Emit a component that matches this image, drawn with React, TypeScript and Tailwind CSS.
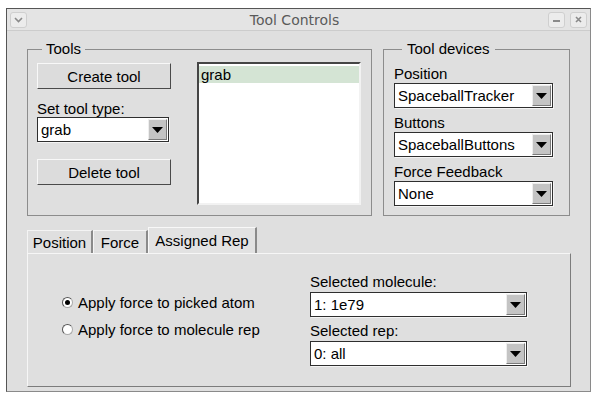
import React from "react";

function Arrow() {
  return (
    <svg width="11" height="6" viewBox="0 0 11 6">
      <path d="M0 0H11L5.5 6Z" fill="#000" />
    </svg>
  );
}

function Select({ value, w }: { value: string; w: string }) {
  return (
    <div className={`${w} h-[25px] flex border border-[#2e2e2e] bg-white shadow-[1px_1px_0_#f4f4f4]`}>
      <div className="flex-1 pl-[3px] flex items-center text-[15px] leading-none text-black">{value}</div>
      <div className="w-[19px] my-px mr-px bg-[#c4c4c4] border border-t-[#eeeeee] border-l-[#eeeeee] border-r-[#7a7a7a] border-b-[#7a7a7a] flex items-center justify-center">
        <Arrow />
      </div>
    </div>
  );
}

function Btn({ label }: { label: string }) {
  return (
    <div className="w-[134px] h-[26px] bg-[#dcdcdc] border border-t-[#f8f8f8] border-l-[#f8f8f8] border-r-[#4a4a4a] border-b-[#4a4a4a] flex items-center justify-center text-[15px] leading-none text-black">
      {label}
    </div>
  );
}

function Radio({ checked, label }: { checked: boolean; label: string }) {
  return (
    <div className="h-[27px] flex items-center gap-[5px]">
      <div className="w-[11px] h-[11px] rounded-full bg-white border border-t-[#555] border-l-[#555] border-r-[#aaa] border-b-[#aaa] flex items-center justify-center">
        {checked && <div className="w-[5px] h-[5px] rounded-full bg-black" />}
      </div>
      <span className="text-[15px] leading-none text-black">{label}</span>
    </div>
  );
}

function TitleBtn({ children }: { children: React.ReactNode }) {
  return (
    <div className="w-[17px] h-[16px] rounded-[3px] bg-[#ececec] border border-[#cfcfcf] flex items-center justify-center">
      {children}
    </div>
  );
}

export default function App() {
  return (
    <div className="w-[597px] h-[398px] bg-white overflow-hidden font-['Liberation_Sans',Arial,sans-serif] text-black">
      <div className="ml-[6px] mt-[8px] w-[585px] h-[384px] border border-[#8a8a8a] border-t-[#555] border-l-[#555] bg-[#dfdfdf] flex flex-col">
        {/* Title bar */}
        <div className="h-[22px] bg-[#e4e4e4] border-b border-[#cccccc] flex items-center px-[3px]">
          <div className="w-[31px]">
            <TitleBtn>
              <svg width="9" height="6" viewBox="0 0 9 6">
                <path d="M1 1L4.5 4.5L8 1" stroke="#8a8a8a" strokeWidth="1.6" fill="none" />
              </svg>
            </TitleBtn>
          </div>
          <div className="flex-1 text-center font-['DejaVu_Sans',sans-serif] text-[14px] text-[#5a5a5a] leading-none">
            Tool Controls
          </div>
          <div className="flex gap-[5px]">
            <TitleBtn>
              <div className="w-[7px] h-[2px] bg-[#8a8a8a] mt-[3px]" />
            </TitleBtn>
            <TitleBtn>
              <svg width="7" height="7" viewBox="0 0 7 7">
                <path d="M1 1L6 6M6 1L1 6" stroke="#8a8a8a" strokeWidth="1.6" />
              </svg>
            </TitleBtn>
          </div>
        </div>

        {/* Body */}
        <div className="flex-1 flex flex-col px-[20px] pt-[10px] pb-[4px]">
          <div className="flex gap-[11px] items-stretch">
            <fieldset className="w-[346px] border border-[#8c8c8c] pl-[9px] pr-[10px] pt-[5px] pb-[10px] flex justify-between">
              <legend className="ml-[5px] px-[4px] text-[15px] leading-[16px]">Tools</legend>
              <div className="flex flex-col pt-[1px]">
                <Btn label="Create tool" />
                <div className="mt-[11px] text-[15px] leading-[17px]">Set tool type:</div>
                <Select value="grab" w="w-[132px]" />
                <div className="mt-[17px]">
                  <Btn label="Delete tool" />
                </div>
              </div>
              <div className="w-[164px] h-[143px] bg-white border-2 border-t-[#454545] border-l-[#454545] border-r-[#f2f2f2] border-b-[#f2f2f2] pt-[2px]">
                <div className="h-[17px] bg-[#d4e4d4] pl-[2px] text-[15px] leading-[17px]">grab</div>
              </div>
            </fieldset>

            <fieldset className="w-[186px] border border-[#8c8c8c] pl-[10px] pr-[16px] pt-[8px] pb-[8px] flex flex-col">
              <legend className="ml-[8px] px-[5px] text-[15px] leading-[16px]">Tool devices</legend>
              <div className="text-[15px] leading-[17px]">Position</div>
              <div className="mt-px">
                <Select value="SpaceballTracker" w="w-[159px]" />
              </div>
              <div className="mt-[6px] text-[15px] leading-[17px]">Buttons</div>
              <div className="mt-px">
                <Select value="SpaceballButtons" w="w-[159px]" />
              </div>
              <div className="mt-[6px] text-[15px] leading-[17px]">Force Feedback</div>
              <div className="mt-px">
                <Select value="None" w="w-[159px]" />
              </div>
            </fieldset>
          </div>

          {/* Tabs */}
          <div className="mt-[11px] flex items-end h-[26px]">
            <div className="w-[66px] h-[23px] border-l border-t border-[#f4f4f4] border-r-2 border-r-[#8a8a8a] flex items-center justify-center text-[15px] leading-none">
              Position
            </div>
            <div className="w-[55px] h-[23px] border-l border-t border-[#f4f4f4] border-r-2 border-r-[#8a8a8a] flex items-center justify-center text-[15px] leading-none">
              Force
            </div>
            <div className="w-[109px] h-[26px] bg-[#e2e2e2] border-l border-t border-[#f8f8f8] border-r-2 border-r-[#8a8a8a] flex items-center justify-center text-[15px] leading-none">
              Assigned Rep
            </div>
          </div>
          <div className="w-[544px] h-[134px] border border-t-[#f6f6f6] border-l-[#f6f6f6] border-r-[#7c7c7c] border-b-[#7c7c7c] flex items-start">
            <div className="w-[282px] pl-[34px] pt-[35px] flex flex-col">
              <Radio checked label="Apply force to picked atom" />
              <Radio checked={false} label="Apply force to molecule rep" />
            </div>
            <div className="pt-[19px] flex flex-col">
              <div className="text-[15px] leading-[17px]">Selected molecule:</div>
              <div className="mt-[2px]">
                <Select value="1: 1e79" w="w-[217px]" />
              </div>
              <div className="mt-[5px] text-[15px] leading-[17px]">Selected rep:</div>
              <div className="mt-[2px]">
                <Select value="0: all" w="w-[217px]" />
              </div>
            </div>
          </div>
        </div>
      </div>
    </div>
  );
}
